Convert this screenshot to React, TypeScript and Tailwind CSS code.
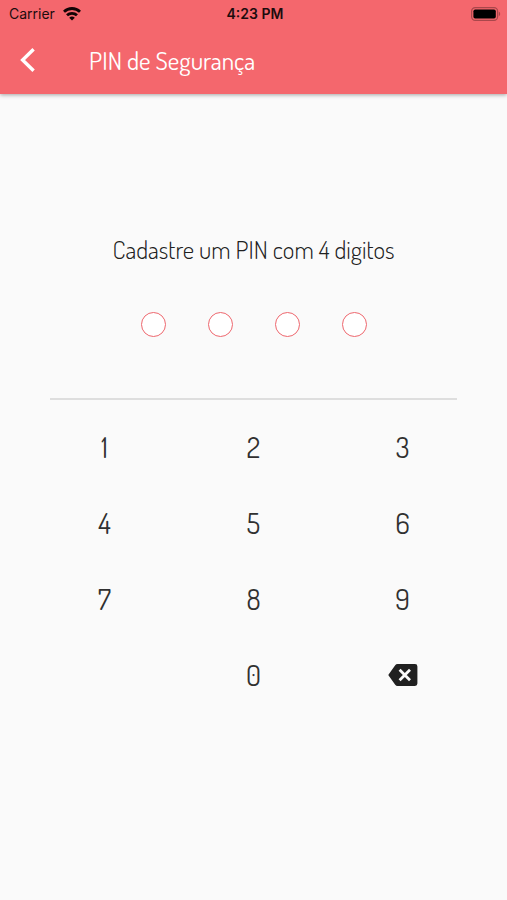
const digits = ["1", "2", "3", "4", "5", "6", "7", "8", "9"];

const keyClass =
  "flex h-19 items-center justify-center text-[28px] leading-[30px] text-[#303030]";

function StatusBar() {
  return (
    <div className="grid h-7 grid-cols-3 items-center pr-1.5 pl-[9px] font-['Inter',sans-serif] text-sm text-[#1c0c0d]">
      <div className="flex items-center gap-2">
        <span>Carrier</span>
        <svg width="18" height="14" viewBox="0 0 18 14" fill="none" stroke="#120405" strokeWidth="2.8" aria-hidden="true">
          <path d="M1 4.7a11.6 11.6 0 0 1 16 0" />
          <path d="M4 8.3a7.3 7.3 0 0 1 10 0" />
          <path d="M9 13.6 6.2 10.7a4.1 4.1 0 0 1 5.6 0z" fill="#120405" stroke="none" />
        </svg>
      </div>
      <span className="text-center font-semibold">4:23 PM</span>
      <svg className="justify-self-end" width="30" height="14" viewBox="0 0 30 14" aria-hidden="true">
        <rect x="0.6" y="0.6" width="26" height="12.8" rx="3.6" fill="none" stroke="#a9474b" strokeWidth="1.2" />
        <rect x="2.4" y="2.4" width="22.4" height="9.2" rx="1.8" fill="#000" />
        <path d="M27.8 4.8c1.8.6 1.8 3.8 0 4.4z" fill="#a9474b" />
      </svg>
    </div>
  );
}

export default function App() {
  return (
    <div className="min-h-screen bg-[#fafafa] font-['Dosis','Roboto_Condensed','Roboto',sans-serif]">
      <header className="bg-[#f4676d] shadow-[0_1px_4px_rgba(0,0,0,0.35)]">
        <StatusBar />
        <div className="flex h-[66px] items-center pl-4">
          <button type="button" aria-label="Voltar" className="flex h-10 w-[73px] items-center pb-0.5">
            <svg width="24" height="26" viewBox="0 0 24 26" fill="none" stroke="#fff" strokeWidth="3.4" aria-hidden="true">
              <path d="M17.6 2.2 6.6 13l11 10.8" />
            </svg>
          </button>
          <h1 className="text-[25px] font-[450] text-white">PIN de Segurança</h1>
        </div>
      </header>

      <main className="pt-35">
        <p className="text-center text-[25px] leading-[30px] font-[350] text-[#202020]">Cadastre um PIN com 4 digitos</p>

        <div className="mt-12 flex justify-center gap-[42px]" role="img" aria-label="0 de 4 digitos">
          {[0, 1, 2, 3].map((slot) => (
            <span key={slot} className="size-[25px] rounded-full border border-[#ee676e] bg-white" />
          ))}
        </div>

        <hr className="mx-[50px] mt-[61px] border-t-2 border-[#dedede]" />

        <div className="mx-[30px] mt-[9px] grid grid-cols-3">
          {digits.map((digit) => (
            <button key={digit} type="button" className={keyClass}>
              {digit}
            </button>
          ))}
          <button type="button" className={`${keyClass} col-start-2`}>0</button>
          <button type="button" aria-label="Apagar" className={keyClass}>
            <svg width="30" height="24" viewBox="0 0 30 24" aria-hidden="true">
              <path d="M9.6 1H27a2.4 2.4 0 0 1 2.4 2.4v17.2A2.4 2.4 0 0 1 27 23H9.6a3 3 0 0 1-2.4-1.2L.6 12.6a1 1 0 0 1 0-1.2l6.6-9.2A3 3 0 0 1 9.6 1z" fill="#202020" />
              <path d="m11.6 6.8 10.4 10.4M22 6.8 11.6 17.2" stroke="#fafafa" strokeWidth="2.8" />
            </svg>
          </button>
        </div>
      </main>
    </div>
  );
}
